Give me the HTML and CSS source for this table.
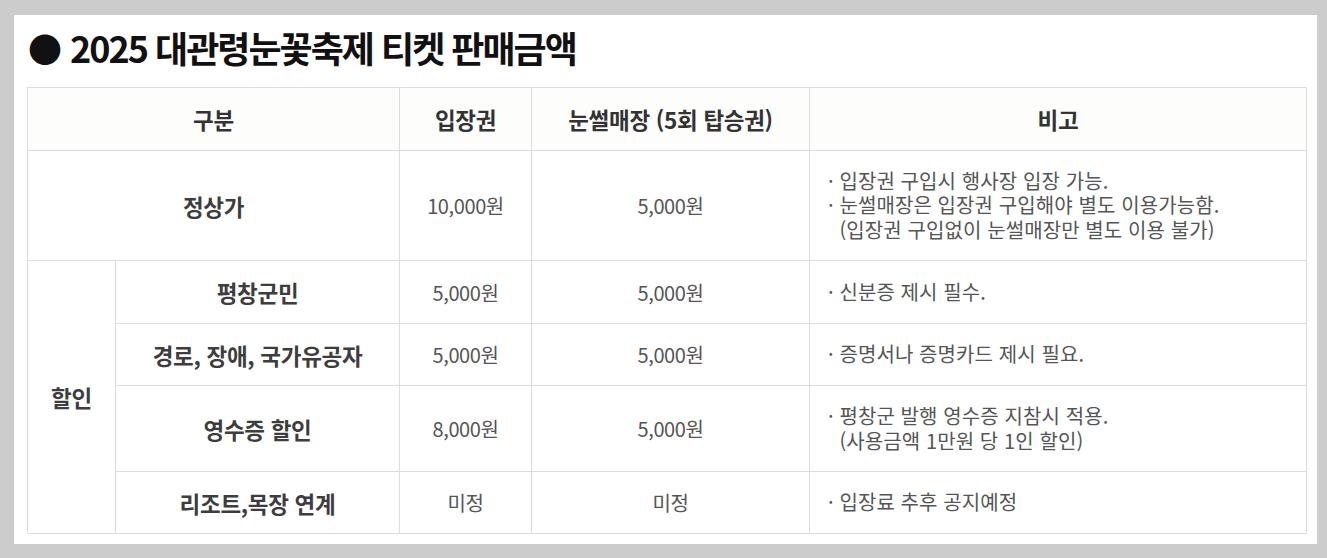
FILE: index.html
```html
<!DOCTYPE html>
<html lang="ko">
<head>
<meta charset="utf-8">
<link rel="stylesheet" href="styles.css">
</head>
<body>
<div class="panel">
  <h1 class="title"><span class="dot">●</span> 2025 대관령눈꽃축제 티켓 판매금액</h1>
  <table class="price">
    <colgroup>
      <col class="c1"><col class="c2"><col class="c3"><col class="c4"><col class="c5">
    </colgroup>
    <thead>
      <tr class="r-head">
        <th colspan="2">구분</th>
        <th>입장권</th>
        <th>눈썰매장 (5회 탑승권)</th>
        <th>비고</th>
      </tr>
    </thead>
    <tbody>
      <tr class="r-normal">
        <td colspan="2" class="label">정상가</td>
        <td>10,000원</td>
        <td>5,000원</td>
        <td class="note">· 입장권 구입시 행사장 입장 가능.<br>· 눈썰매장은 입장권 구입해야 별도 이용가능함.<br>&nbsp;&nbsp;(입장권 구입없이 눈썰매장만 별도 이용 불가)</td>
      </tr>
      <tr class="r-a">
        <td rowspan="4" class="label">할인</td>
        <td class="label">평창군민</td>
        <td>5,000원</td>
        <td>5,000원</td>
        <td class="note">· 신분증 제시 필수.</td>
      </tr>
      <tr class="r-b">
        <td class="label">경로, 장애, 국가유공자</td>
        <td>5,000원</td>
        <td>5,000원</td>
        <td class="note">· 증명서나 증명카드 제시 필요.</td>
      </tr>
      <tr class="r-c">
        <td class="label">영수증 할인</td>
        <td>8,000원</td>
        <td>5,000원</td>
        <td class="note">· 평창군 발행 영수증 지참시 적용.<br>&nbsp;&nbsp;(사용금액 1만원 당 1인 할인)</td>
      </tr>
      <tr class="r-d">
        <td class="label">리조트,목장 연계</td>
        <td>미정</td>
        <td>미정</td>
        <td class="note">· 입장료 추후 공지예정</td>
      </tr>
    </tbody>
  </table>
</div>
</body>
</html>
```

FILE: styles.css
```css
html, body {
  margin: 0;
  padding: 0;
  background: #cccccc;
}
body {
  padding: 15px 15px 15px 14px;
  font-family: "Noto Sans CJK KR", "Noto Sans", sans-serif;
}
.panel {
  background: #ffffff;
  width: 1285px;
  padding: 0 5px 10px 13px;
}
.title {
  margin: 0;
  height: 72px;
  padding-left: 1px;
  font-size: 36px;
  line-height: 64px;
  font-weight: 700;
  letter-spacing: -2px;
  color: #111;
}
.title .dot {
  letter-spacing: 0;
  font-size: 34px;
}
.price {
  border-collapse: collapse;
  table-layout: fixed;
  width: 1280px;
  border: 1px solid #dddddd;
}
.c1 { width: 88px; }
.c2 { width: 284px; }
.c3 { width: 132px; }
.c4 { width: 278px; }
.c5 { width: 497px; }
.price th, .price td {
  border: 1px solid #dddddd;
  text-align: center;
  padding: 0;
  font-size: 20px;
  color: #555;
  font-weight: 400;
  letter-spacing: -0.4px;
}
.price th {
  background: #fdfdfb;
  font-size: 22.5px;
  font-weight: 700;
  color: #333;
  letter-spacing: -0.3px;
}
.price td.label {
  font-size: 22.5px;
  font-weight: 700;
  color: #3d3d3d;
  letter-spacing: -0.3px;
}
.price td.note {
  text-align: left;
  padding-left: 18px;
  line-height: 24.5px;
  letter-spacing: 0.1px;
}
.r-head { height: 63px; }
.r-normal { height: 110px; }
.r-a { height: 63px; }
.r-b { height: 62px; }
.r-c { height: 86px; }
.r-d { height: 62px; }
```
